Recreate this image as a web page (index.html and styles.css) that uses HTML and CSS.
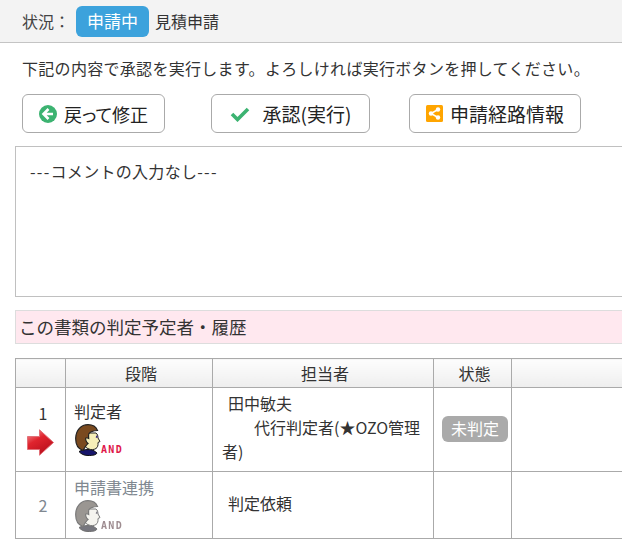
FILE: index.html
```html
<!DOCTYPE html>
<html lang="ja">
<head>
<meta charset="utf-8">
<title>承認</title>
<link rel="stylesheet" href="styles.css">
</head>
<body>
<header class="status">
  <span class="status-label">状況：</span>
  <span class="status-badge">申請中</span>
  <span class="status-name">見積申請</span>
</header>
<main class="content">
  <p class="notice">下記の内容で承認を実行します。よろしければ実行ボタンを押してください。</p>
  <div class="actions">
    <button class="btn btn-back">
      <svg class="ico" width="18" height="18" viewBox="0 0 18 18"><circle cx="9" cy="9" r="9" fill="#3cb371"/><path d="M9.500 4 4.500 9l5 5M5 9h9" fill="none" stroke="#fff" stroke-width="2.600"/></svg>
      <span class="tight">戻って修正</span>
    </button>
    <button class="btn btn-ok">
      <svg class="ico-check" width="20" height="16" viewBox="0 0 20 16"><path d="M2 8l5.500 5.500L18 3" fill="none" stroke="#3cb371" stroke-width="3.600"/></svg>
      <span>承認(実行)</span>
    </button>
    <button class="btn btn-route">
      <svg class="ico" width="17" height="17" viewBox="0 0 17 17"><rect width="17" height="17" rx="1.500" fill="#ffa500"/><path d="M12 4.500 5 8.500l7 4" fill="none" stroke="#fff" stroke-width="1.500"/><circle cx="12" cy="4.500" r="2.200" fill="#fff"/><circle cx="5" cy="8.500" r="2.200" fill="#fff"/><circle cx="12" cy="12.500" r="2.200" fill="#fff"/></svg>
      <span>申請経路情報</span>
    </button>
  </div>
  <div class="comment"><span class="dash">---</span>コメントの入力なし<span class="dash">---</span></div>
  <h2 class="section">この書類の判定予定者・履歴</h2>
  <table class="history">
    <colgroup>
      <col class="c-no"><col class="c-step"><col class="c-person"><col class="c-state"><col class="c-rest">
    </colgroup>
    <thead>
      <tr><th></th><th>段階</th><th>担当者</th><th>状態</th><th></th></tr>
    </thead>
    <tbody>
      <tr class="row-current">
        <td class="no">1
          <svg class="arrow" width="27" height="27" viewBox="0 0 27 27"><defs><linearGradient id="ag" x1="0" y1="0" x2=".6" y2="1"><stop offset="0" stop-color="#f6a0a4"/><stop offset=".45" stop-color="#e0242e"/><stop offset="1" stop-color="#b80f1c"/></linearGradient></defs><path d="M.5 7.500h12V.8L26.500 13.500 12.500 26.200V20.500H.5z" fill="url(#ag)" stroke="#e27078" stroke-width="1"/></svg>
        </td>
        <td class="step">判定者
          <div class="who">
            <svg width="26" height="32" viewBox="0 0 26 32"><use href="#face"/></svg><span class="and">AND</span>
          </div>
        </td>
        <td class="person"><span class="indent1">田中敏夫</span><br><span class="indent2">代行判定者(★OZO管理者)</span></td>
        <td class="state"><span class="pill">未判定</span></td>
        <td></td>
      </tr>
      <tr class="row-next">
        <td class="no">2</td>
        <td class="step">申請書連携
          <div class="who dim">
            <svg width="26" height="32" viewBox="0 0 26 32"><use href="#face"/></svg><span class="and">AND</span>
          </div>
        </td>
        <td class="person"><span class="indent1">判定依頼</span></td>
        <td></td>
        <td></td>
      </tr>
    </tbody>
  </table>
</main>
<svg class="defs" width="0" height="0">
  <defs>
    <g id="face">
      <path d="M4 27.500c3-2 10-2.500 14-1.500l4 3c-1 2-4 2.500-9 2.500-4 0-7-1.500-9-4z" fill="#17156b" stroke="#111" stroke-width="1"/>
      <path d="M10 9h11c1.500 1 2 3 2 5l2 3.500-2 1c.3 3-.5 5-2 6-2 1.300-5 1.500-7 .5-3-1-5-3-5-6z" fill="#f6efb8" stroke="#222" stroke-width="1"/>
      <path d="M8 26.500C3 25 .5 20 .7 14 1 6 6 .7 13 .7c5 0 8 2 9.500 5.800-3 .2-7 .8-8.500 3-.8 1.500-.3 3.500-.3 5-1-.5-2-1.200-2.700-.5-1 1.200.3 4 2 5.500-1.500 1-3 3.500-5 7z" fill="#7a4a1f" stroke="#222" stroke-width="1.200"/>
      <path d="M21 12.500l1.500.5" stroke="#3c2a80" stroke-width="2"/>
    </g>
  </defs>
</svg>
</body>
</html>
```
FILE: styles.css
```css
html, body {
  margin: 0;
  padding: 0;
  width: 622px;
  height: 558px;
  overflow: hidden;
  background: #fff;
}
body {
  font-family: "Noto Sans CJK JP", "Noto Sans", sans-serif;
  font-size: 16px;
  color: #333;
}
.status {
  display: flex;
  align-items: center;
  height: 42px;
  padding-left: 22px;
  background: #f3f3f3;
  border-bottom: 1px solid #c4c4c4;
}
.status-label { width: 54px; color: #444; }
.status-badge {
  width: 73px;
  height: 31px;
  line-height: 30px;
  text-align: center;
  margin-right: 6px;
  background: #3ca2dc;
  color: #fff;
  font-size: 17px;
  border-radius: 6px;
}
.content {
  width: 640px;
  padding-left: 15px;
}
.notice {
  margin: 0;
  padding: 15px 0 0 7px;
  line-height: 20px;
  height: 36px;
  white-space: nowrap;
  letter-spacing: .3px;
}
.actions {
  display: flex;
  padding-left: 7px;
  height: 52px;
}
.btn {
  display: flex;
  align-items: center;
  justify-content: center;
  height: 39px;
  padding: 0;
  background: #fff;
  border: 1px solid #aaa;
  border-radius: 6px;
  font-family: inherit;
  font-size: 19px;
  color: #222;
  white-space: nowrap;
}
.tight { font-feature-settings: "palt"; font-size: 18px; }
.btn-back { width: 143px; margin-right: 46px; }
.btn-ok { width: 159px; margin-right: 39px; }
.btn-route { width: 172px; }
.ico { margin-right: 7px; }
.ico-check { margin-right: 13px; }
.comment {
  box-sizing: border-box;
  height: 151px;
  padding: 13px 14px;
  border: 1px solid #c0c0c0;
  line-height: 22px;
  letter-spacing: .3px;
  color: #333;
}
.dash { letter-spacing: 1.300px; }
.section {
  box-sizing: border-box;
  height: 34px;
  margin: 13px 0 14px;
  padding-left: 3px;
  background: #ffe8ef;
  border: 1px solid #ddd;
  font-weight: 400;
  font-size: 17.500px;
  line-height: 31px;
  color: #333;
}
.history {
  table-layout: fixed;
  width: 640px;
  border-collapse: collapse;
}
.c-no { width: 50px; }
.c-step { width: 147px; }
.c-person { width: 221px; }
.c-state { width: 78px; }
.history th, .history td { border: 1px solid #aaa; padding: 0; }
.history th {
  height: 28px;
  padding-left: 4px;
  font-weight: 400;
  color: #333;
  line-height: 20px;
  background: linear-gradient(#fdfdfd, #eee);
}
.row-current { height: 84px; }
.row-next { height: 67px; }
.history .no { padding-left: 5px; text-align: center; line-height: 20px; }
.arrow { display: block; margin: 6px 0 0 6px; }
.history .step { padding: 0 0 3px 8px; line-height: 22px; }
.who { display: flex; align-items: flex-end; height: 32px; margin: 2px 0 0 1px; }
.and {
  color: #e0184a;
  font-family: "DejaVu Sans Mono", monospace;
  font-size: 10px;
  font-weight: 700;
  letter-spacing: 1.300px;
  line-height: 10px;
  margin-bottom: 1px;
}
.history .person { padding: 0 4px 5px 9px; line-height: 24px; }
.indent1 { margin-left: 6px; }
.indent2 { margin-left: 32px; }
.history .state { padding: 0 0 2px 8px; }
.pill {
  display: block;
  width: 66px;
  height: 26px;
  line-height: 25px;
  text-align: center;
  background: #aaa;
  color: #fff;
  border-radius: 6px;
}
.row-next .no, .row-next .step { color: #808890; }
.dim { filter: grayscale(.85) opacity(.6); }
.defs { position: absolute; }
```
